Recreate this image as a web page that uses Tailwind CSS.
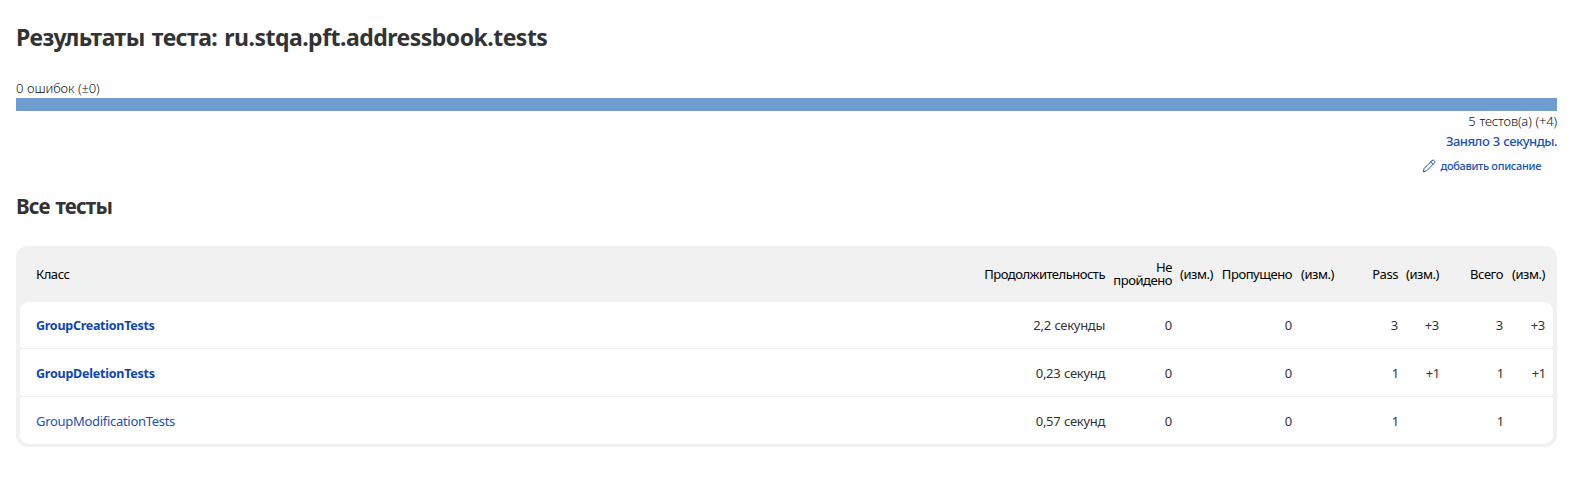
<!DOCTYPE html>
<html lang="ru">
<head>
<meta charset="utf-8">
<title>Результаты теста: ru.stqa.pft.addressbook.tests</title>
<script src="https://cdn.jsdelivr.net/npm/@tailwindcss/browser@4"></script>
</head>
<body class="bg-white font-['Noto_Sans','Open_Sans',sans-serif] text-[13px] text-[#333333]">
<main class="ml-4 w-[1541px] pt-5">
  <h1 class="h-[34px] text-[23px] leading-[34px] font-bold tracking-[-0.52px] [word-spacing:1.5px]">Результаты теста: ru.stqa.pft.addressbook.tests</h1>
  <div class="mt-[24px] h-5 leading-5 font-light tracking-[-0.12px] text-[#111111] [word-spacing:0.5px]">0 ошибок (±0)</div>
  <div class="h-[13px] bg-[#6f9dcf]"></div>
  <div class="h-5 text-right leading-5 font-light tracking-[-0.15px] text-[#111111] [word-spacing:0.7px]">5 тестов(а) (+4)</div>
  <div class="h-5 text-right leading-5"><a class="font-medium tracking-[-0.5px] text-[#1a52b8] [word-spacing:0.7px]">Заняло 3 секунды.</a></div>
  <div class="mt-[5px] flex h-5 items-center justify-end gap-1 pr-4 text-[11px] leading-5 font-medium tracking-[-0.33px] text-[#1a52b8]">
    <svg class="size-[14px]" viewBox="0 0 512 512" fill="none" stroke="currentColor" stroke-width="36" stroke-linecap="round" stroke-linejoin="round"><path d="M364 60 80 344 44 468l124-36L452 148c26-26 26-60 4-84l-8-8c-24-22-60-22-84 4zM320 104l88 88"/></svg>
    <a>добавить описание</a>
  </div>
  <h2 class="mt-[14px] h-8 text-[20.5px] leading-8 font-bold tracking-[-0.8px] [word-spacing:1.2px]">Все тесты</h2>

  <div class="mt-6 rounded-xl bg-[#f1f1f1] px-1 pb-[3px]">
    <div class="grid h-14 grid-cols-[1fr_132px_67px_41px_79px_42px_64px_41px_64px_42px] items-center pr-2 pl-4 text-right leading-[13px] tracking-[-0.45px] text-black">
      <div class="text-left">Класс</div>
      <div class="tracking-[-0.5px]">Продолжительность</div>
      <div class="grid leading-[13px]"><span class="h-[13px]">Не</span><span class="h-[13px]">пройдено</span></div>
      <div>(изм.)</div>
      <div>Пропущено</div>
      <div>(изм.)</div>
      <div>Pass</div>
      <div>(изм.)</div>
      <div>Всего</div>
      <div>(изм.)</div>
    </div>
    <div class="flex flex-col gap-px tracking-[-0.3px] [word-spacing:0.5px]">
      <div class="grid h-[46px] grid-cols-[1fr_132px_67px_41px_79px_42px_64px_41px_64px_42px] items-center rounded-t-[9px] rounded-b-[3px] bg-white pt-0.5 pr-2 pl-4 text-right">
        <div class="text-left"><a class="text-[12.5px] font-bold tracking-[-0.27px] text-[#0b46b3]">GroupCreationTests</a></div>
        <div>2,2 секунды</div><div>0</div><div></div><div>0</div><div></div><div>3</div><div>+3</div><div>3</div><div>+3</div>
      </div>
      <div class="grid h-[47px] grid-cols-[1fr_132px_67px_41px_79px_42px_64px_41px_64px_42px] items-center rounded-[3px] bg-white pt-0.5 pr-2 pl-4 text-right">
        <div class="text-left"><a class="text-[12.5px] font-bold tracking-[-0.23px] text-[#0b46b3]">GroupDeletionTests</a></div>
        <div>0,23 секунд</div><div>0</div><div></div><div>0</div><div></div><div class="-mr-px">1</div><div class="-mr-px">+1</div><div class="-mr-px">1</div><div class="-mr-px">+1</div>
      </div>
      <div class="grid h-[47px] grid-cols-[1fr_132px_67px_41px_79px_42px_64px_41px_64px_42px] items-center rounded-t-[3px] rounded-b-[9px] bg-white pt-0.5 pr-2 pl-4 text-right">
        <div class="text-left"><a class="tracking-[-0.3px] text-[#1a52b8]">GroupModificationTests</a></div>
        <div>0,57 секунд</div><div>0</div><div></div><div>0</div><div></div><div class="-mr-px">1</div><div></div><div class="-mr-px">1</div><div></div>
      </div>
    </div>
  </div>
</main>
</body>
</html>
